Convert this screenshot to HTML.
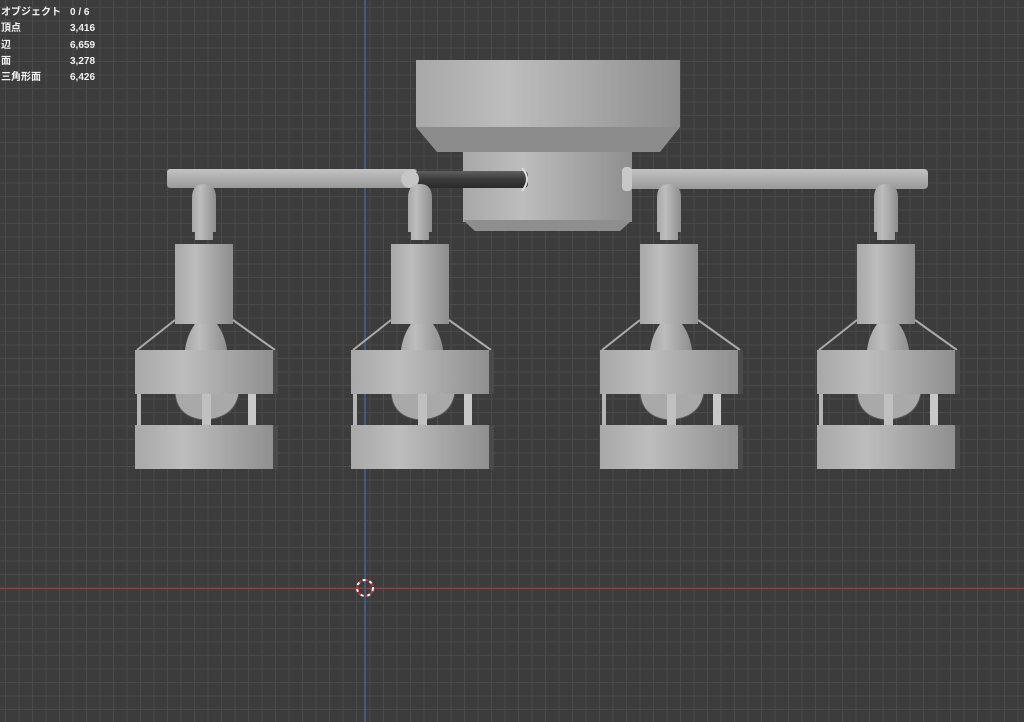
<!DOCTYPE html>
<html><head><meta charset="utf-8"><style>
html,body{margin:0;padding:0;width:1024px;height:722px;overflow:hidden;background:#3d3d3d}
.bg{position:absolute;left:0;top:0;width:1024px;height:722px;
background-color:#3c3c3c;
background-image:linear-gradient(to right,#4a4a4a 1px,transparent 1px),linear-gradient(to bottom,#4a4a4a 1px,transparent 1px);
background-size:13.5px 13.5px;background-position:5px 7px}
.stats{position:absolute;left:1px;top:5px;color:#f2f2f2;font:bold 10px "Liberation Sans","Noto Sans CJK JP",sans-serif;line-height:16.3px;white-space:nowrap}
.stats div{position:relative;height:16.3px;width:120px}
.stats span{position:absolute;left:69px;top:0}
svg{position:absolute;left:0;top:0}
</style></head><body>
<div class="bg"></div>
<svg width="1024" height="722" viewBox="0 0 1024 722">
<defs>
<linearGradient id="g" x1="0" x2="1" y1="0" y2="0">
<stop offset="0" stop-color="#a8a8a8"/><stop offset="0.35" stop-color="#bdbdbd"/><stop offset="1" stop-color="#8e8e8e"/></linearGradient>
<linearGradient id="gv" x1="0" x2="0" y1="0" y2="1">
<stop offset="0" stop-color="#c2c2c2"/><stop offset="1" stop-color="#9a9a9a"/></linearGradient>
<linearGradient id="dk" x1="0" x2="0" y1="0" y2="1">
<stop offset="0" stop-color="#606060"/><stop offset="0.5" stop-color="#3a3a3a"/><stop offset="1" stop-color="#2a2a2a"/></linearGradient>
<g id="lamp">
<path d="M57 198 Q57 184 69 184 Q81 184 81 198 L81 232 L78 232 L78 240 L60 240 L60 232 L57 232 Z" fill="url(#g)"/>
<rect x="40" y="244" width="58" height="80" fill="url(#g)"/>
<path d="M40 320 L2 350 M98 320 L140 350" stroke="#aaa" stroke-width="2" fill="none"/>
<path d="M60 324 L82 324 Q90 335 92 350 L50 350 Q52 335 60 324 Z" fill="url(#g)"/>
<path d="M40 393 Q42 418 70 420 Q100 418 104 393 Z" fill="#a9a9a9" stroke="#555" stroke-width="1"/>
<rect x="2" y="393" width="4" height="33" fill="#b5b5b5"/>
<rect x="67" y="393" width="9" height="33" fill="#c0c0c0"/>
<rect x="113" y="393" width="8" height="33" fill="#c8c8c8"/>
<rect x="0" y="350" width="140" height="44" fill="url(#g)"/>
<rect x="138" y="350" width="5" height="44" fill="#4a4a4a"/>
<rect x="0" y="425" width="140" height="44" fill="url(#g)"/>
<rect x="138" y="425" width="5" height="44" fill="#4a4a4a"/>
</g>
</defs>
<line x1="365" y1="0" x2="365" y2="722" stroke="#3f6aa8" stroke-width="1.3"/>
<line x1="0" y1="588.5" x2="1024" y2="588.5" stroke="#a23a3a" stroke-width="1.3"/>
<circle cx="365" cy="588" r="8" fill="none" stroke="#fff" stroke-width="2" stroke-dasharray="4 3"/>
<circle cx="365" cy="588" r="8" fill="none" stroke="#c03030" stroke-width="2" stroke-dasharray="3 4" stroke-dashoffset="4"/>
<rect x="416" y="60" width="264" height="67" fill="url(#g)"/>
<path d="M416 127 L680 127 L660 152 L437 152 Z" fill="#8c8c8c"/>
<rect x="463" y="152" width="169" height="70" fill="url(#g)"/>
<path d="M463 220 L632 220 L620 231 L475 231 Z" fill="#8e8e8e"/>
<rect x="167" y="169" width="250" height="19" rx="3" fill="url(#gv)"/>
<rect x="415" y="171" width="113" height="17" rx="4" fill="url(#dk)"/>
<path d="M522 168 Q532 179 522 191" stroke="#ddd" stroke-width="2" fill="none"/>
<circle cx="410" cy="179" r="9" fill="#c6c6c6"/>
<rect x="628" y="169" width="300" height="20" rx="4" fill="url(#gv)"/>
<rect x="622" y="167" width="10" height="24" rx="4" fill="#c8c8c8"/>
<use href="#lamp" x="135" y="0"/>
<use href="#lamp" x="351" y="0"/>
<use href="#lamp" x="600" y="0"/>
<use href="#lamp" x="817" y="0"/>
</svg>
<div class="stats">
<div>オブジェクト<span>0 / 6</span></div>
<div>頂点<span>3,416</span></div>
<div>辺<span>6,659</span></div>
<div>面<span>3,278</span></div>
<div>三角形面<span>6,426</span></div>
</div>
</body></html>
